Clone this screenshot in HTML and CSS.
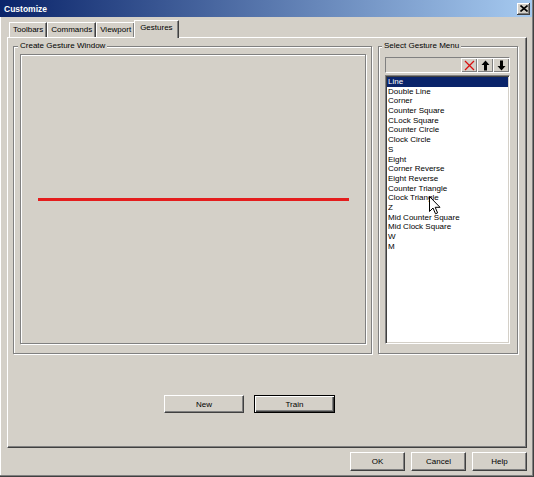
FILE: index.html
```html
<!DOCTYPE html>
<html>
<head>
<meta charset="utf-8">
<title>Customize</title>
<link rel="stylesheet" href="styles.css">
</head>
<body>
<div class="window">
  <div class="titlebar">
    <span class="title">Customize</span>
    <span class="close"><svg width="8" height="7" viewBox="0 0 8 7"><path d="M0.5 0.5 L7.5 6.5 M7.5 0.5 L0.5 6.5" stroke="#000" stroke-width="1.6" fill="none"/></svg></span>
  </div>
  <div class="client">
    <div class="tabs">
      <div class="tab">Toolbars</div>
      <div class="tab">Commands</div>
      <div class="tab">Viewport</div>
      <div class="tab active">Gestures</div>
    </div>
    <div class="panel">
      <div class="groups">
        <div class="group create">
          <span class="group-title">Create Gesture Window</span>
          <div class="canvas"><div class="stroke"></div></div>
        </div>
        <div class="group select">
          <span class="group-title">Select Gesture Menu</span>
          <div class="toolbar">
            <span class="tool"><svg width="11" height="11" viewBox="0 0 11 11"><path d="M1 1 L10 10 M10 1 L1 10" stroke="#d81010" stroke-width="1.3" fill="none"/></svg></span>
            <span class="tool"><svg width="9" height="11" viewBox="0 0 9 11"><path d="M4.5 0.5 L8.5 5 L6 5 L6 10.5 L3 10.5 L3 5 L0.5 5 Z" fill="#000"/></svg></span>
            <span class="tool"><svg width="9" height="11" viewBox="0 0 9 11"><path d="M4.5 10.5 L8.5 6 L6 6 L6 0.5 L3 0.5 L3 6 L0.5 6 Z" fill="#000"/></svg></span>
          </div>
          <ul class="list">
            <li class="selected">Line</li>
            <li>Double Line</li>
            <li>Corner</li>
            <li>Counter Square</li>
            <li>CLock Square</li>
            <li>Counter Circle</li>
            <li>Clock Circle</li>
            <li>S</li>
            <li>Eight</li>
            <li>Corner Reverse</li>
            <li>Eight Reverse</li>
            <li>Counter Triangle</li>
            <li>Clock Triangle</li>
            <li>Z</li>
            <li>Mid Counter Square</li>
            <li>Mid Clock Square</li>
            <li>W</li>
            <li>M</li>
            <svg class="cursor" width="12" height="19" viewBox="0 0 12 19"><path d="M0.5 0.5 L0.5 15.5 L4 12 L6.5 17.8 L8.6 16.9 L6.2 11.3 L11 11.3 Z" fill="#fff" stroke="#000" stroke-width="1"/></svg>
          </ul>
        </div>
      </div>
      <div class="actions">
        <button class="btn new">New</button>
        <button class="btn train default">Train</button>
      </div>
    </div>
    <div class="footer">
      <button class="btn small">OK</button>
      <button class="btn small">Cancel</button>
      <button class="btn small">Help</button>
    </div>
  </div>
</div>
</body>
</html>
```
FILE: styles.css
```css
* { box-sizing: border-box; }
html, body { margin: 0; padding: 0; }
body {
  width: 534px;
  height: 477px;
  overflow: hidden;
  background: #d4d0c8;
  font-family: "Liberation Sans", Arial, sans-serif;
  font-size: 8px;
  color: #000;
}
.window {
  width: 534px;
  height: 477px;
  background: #d4d0c8;
  box-shadow: inset -1px -1px #404040, inset -2px -2px #808080, inset 1px 0 #fff;
  display: flex;
  flex-direction: column;
}
.titlebar {
  height: 17px;
  margin-right: 2px;
  background: linear-gradient(to right, #0a246a, #a6caf0);
  display: flex;
  align-items: center;
  justify-content: space-between;
  padding: 0 2px 0 4px;
}
.title {
  color: #fff;
  font-weight: bold;
  font-size: 8.5px;
}
.close {
  width: 13px;
  height: 12px;
  background: #d4d0c8;
  box-shadow: inset -1px -1px #404040, inset 1px 1px #fff, inset -2px -2px #808080;
  display: flex;
  align-items: center;
  justify-content: center;
}
.close svg { display: block; }
.client {
  padding: 3px 7px 0 7px;
}
.tabs {
  display: flex;
  align-items: flex-end;
  height: 17px;
  padding-left: 2px;
}
.tab {
  height: 15px;
  padding: 0 3px;
  border: 1px solid;
  border-color: #fff #404040 transparent #fff;
  border-bottom: none;
  box-shadow: inset -1px 0 #808080;
  line-height: 13px;
  white-space: nowrap;
}
.tab.active {
  position: relative;
  z-index: 1;
  height: 18px;
  margin: 0 -2px -1px -1px;
  padding: 0 5px 0 5px;
  background: #d4d0c8;
  line-height: 14px;
}
.panel {
  height: 411px;
  border: 1px solid;
  border-color: #fff #404040 #404040 #fff;
  box-shadow: inset -1px -1px #808080;
  padding: 8px 8px 0 5px;
}
.groups {
  display: flex;
  gap: 6px;
}
.group {
  display: flex;
  flex-direction: column;
  border: 1px solid #808080;
  box-shadow: inset 1px 1px #fff, 1px 1px #fff;
  padding: 0 5px 9px 6px;
}
.group.create { width: 359px; }
.group.select { flex: 1; padding-right: 7px; }
.group-title {
  align-self: flex-start;
  height: 10px;
  line-height: 10px;
  margin: -6px 0 0 -2px;
  padding: 0 2px;
  background: #d4d0c8;
  white-space: nowrap;
}
.select .group-title { margin-left: -3px; }
.canvas {
  margin-top: 3px;
  height: 290px;
  border: 1px solid #808080;
  box-shadow: inset 1px 1px #fff, 1px 1px #fff;
  display: flex;
  align-items: center;
  justify-content: center;
}
.stroke {
  width: 311px;
  height: 3px;
  background: #e41d1d;
}
.toolbar {
  margin-top: 6px;
  height: 16px;
  border: 1px solid;
  border-color: #808080 #fff #fff #808080;
  display: flex;
  justify-content: flex-end;
}
.tool {
  width: 16px;
  height: 14px;
  box-shadow: inset 1px 1px #fff, inset -1px -1px #808080;
  display: flex;
  align-items: center;
  justify-content: center;
}
.tool svg { display: block; }
.list {
  position: relative;
  list-style: none;
  margin: 2px 0 0 0;
  padding: 1px;
  height: 269px;
  background: #fff;
  border: 1px solid;
  border-color: #808080 #fff #fff #808080;
  box-shadow: inset 1px 1px #404040, inset -1px -1px #d4d0c8;
}
.list li {
  height: 9.7px;
  line-height: 9.7px;
  padding-left: 1px;
  white-space: nowrap;
}
.list li.selected {
  background: #0a246a;
  color: #fff;
}
.cursor {
  position: absolute;
  left: 43px;
  top: 120px;
}
.actions {
  display: flex;
  gap: 10px;
  margin: 41px 0 0 151px;
}
.btn {
  font-family: "Liberation Sans", Arial, sans-serif;
  font-size: 8px;
  color: #000;
  background: #d4d0c8;
  height: 18px;
  padding: 0;
  border: 1px solid;
  border-color: #fff #404040 #404040 #fff;
  box-shadow: inset -1px -1px #808080;
  border-radius: 0;
}
.btn.new { width: 80px; }
.btn.train { width: 81px; }
.btn.default {
  border: 1px solid #000;
  box-shadow: inset 1px 1px #fff, inset -1px -1px #404040, inset -2px -2px #808080;
}
.footer {
  display: flex;
  justify-content: flex-end;
  gap: 6px;
  padding-top: 4px;
}
.btn.small {
  width: 55px;
  height: 19px;
}
```
